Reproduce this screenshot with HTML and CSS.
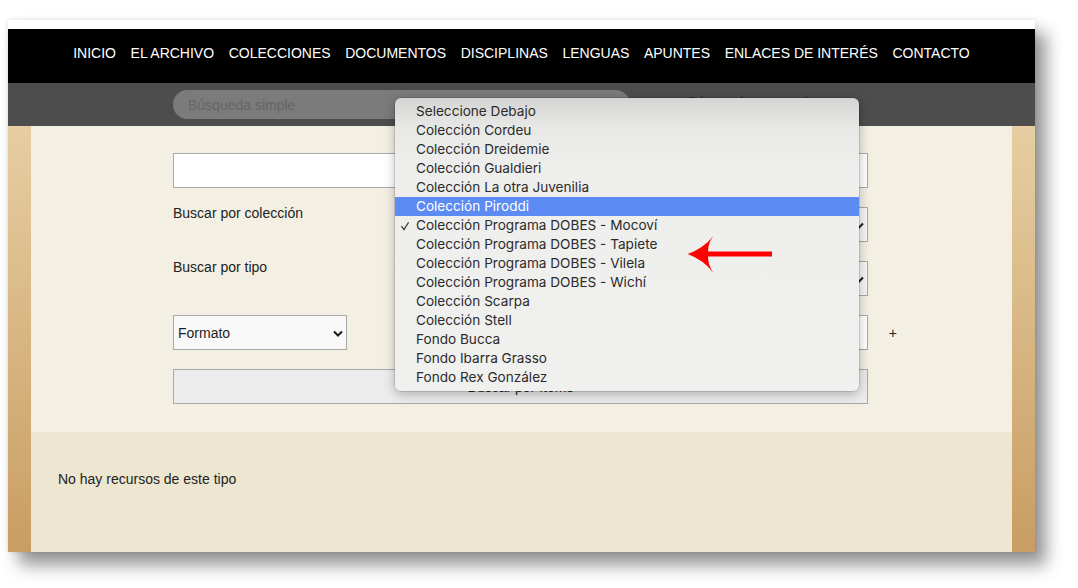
FILE: index.html
```html
<!DOCTYPE html>
<html lang="es">
<head>
<meta charset="utf-8">
<title>Archivo</title>
<link rel="stylesheet" href="styles.css">
</head>
<body>
<div class="shot">
  <div class="topstrip"></div>
  <nav class="nav">
    <span>INICIO</span>
    <span>EL ARCHIVO</span>
    <span>COLECCIONES</span>
    <span>DOCUMENTOS</span>
    <span>DISCIPLINAS</span>
    <span>LENGUAS</span>
    <span>APUNTES</span>
    <span>ENLACES DE INTERÉS</span>
    <span>CONTACTO</span>
  </nav>
  <div class="searchband">
    <div class="pill">Búsqueda simple</div>
    <div class="adv">Búsqueda avanzada</div>
  </div>
  <div class="main">
    <div class="content">
      <div class="form">
        <div class="field"></div>
        <div class="row">
          <span class="label">Buscar por colección</span>
          <div class="sel grow"><svg class="chev" width="10" height="7" viewBox="0 0 10 7"><path d="M1 1.5 L5 5.5 L9 1.5" fill="none" stroke="#1a1a1a" stroke-width="2"/></svg></div>
        </div>
        <div class="row">
          <span class="label">Buscar por tipo</span>
          <div class="sel grow"><svg class="chev" width="10" height="7" viewBox="0 0 10 7"><path d="M1 1.5 L5 5.5 L9 1.5" fill="none" stroke="#1a1a1a" stroke-width="2"/></svg></div>
        </div>
        <div class="row r4">
          <div class="sel fmt"><span>Formato</span><svg class="chev" width="10" height="7" viewBox="0 0 10 7"><path d="M1 1.5 L5 5.5 L9 1.5" fill="none" stroke="#1a1a1a" stroke-width="2"/></svg></div>
          <div class="field grow"></div>
          <span class="plus">+</span>
        </div>
        <div class="btn">Buscar por ítems</div>
      </div>
      <div class="results">No hay recursos de este tipo</div>
    </div>
  </div>
</div>

<div class="popup">
  <div class="opt">Seleccione Debajo</div>
  <div class="opt">Colección Cordeu</div>
  <div class="opt">Colección Dreidemie</div>
  <div class="opt">Colección Gualdieri</div>
  <div class="opt">Colección La otra Juvenilia</div>
  <div class="opt hl">Colección Piroddi</div>
  <div class="opt checked"><svg class="check" width="10" height="10" viewBox="0 0 10 10"><path d="M1.5 5.2 L4 8.6 L8.6 1.2" fill="none" stroke="#333" stroke-width="1.2"/></svg>Colección Programa DOBES - Mocoví</div>
  <div class="opt">Colección Programa DOBES - Tapiete</div>
  <div class="opt">Colección Programa DOBES - Vilela</div>
  <div class="opt">Colección Programa DOBES - Wichí</div>
  <div class="opt">Colección Scarpa</div>
  <div class="opt">Colección Stell</div>
  <div class="opt">Fondo Bucca</div>
  <div class="opt">Fondo Ibarra Grasso</div>
  <div class="opt">Fondo Rex González</div>
</div>

<svg class="arrow" width="92" height="44" viewBox="0 0 92 44">
  <path d="M3.7 21 Q20 15 29.3 3 Q24 10 24 18.5 L88 18.5 L88 23.5 L24 23.5 Q24 32 29.3 40 Q20 27 3.7 21 Z" fill="#ff0000"/>
</svg>
</body>
</html>
```

FILE: styles.css
```css
html, body {
  margin: 0;
  padding: 0;
  background: #ffffff;
}

body {
  font-family: "Liberation Sans", Arial, sans-serif;
  position: relative;
  width: 1078px;
  height: 588px;
  overflow: hidden;
}

.shot {
  margin: 20px 0 0 8px;
  width: 1027px;
  height: 532px;
  background: #ffffff;
  box-shadow: 11px 13px 16px rgba(0, 0, 0, 0.42), 0 0 5px rgba(0, 0, 0, 0.12);
  display: flex;
  flex-direction: column;
}

.topstrip {
  height: 9px;
  flex: none;
  background: #ffffff;
}

.nav {
  height: 54px;
  flex: none;
  box-sizing: border-box;
  padding-bottom: 6px;
  background: #000000;
  display: flex;
  justify-content: center;
  align-items: center;
  gap: 14.6px;
  color: #ffffff;
  font-size: 14px;
}

.searchband {
  height: 43px;
  flex: none;
  box-sizing: border-box;
  background: #4d4d4d;
  display: flex;
  align-items: flex-start;
  padding-left: 165px;
}

.pill {
  margin-top: 7px;
  width: 457px;
  height: 29px;
  box-sizing: border-box;
  border-radius: 15px;
  background: #7b7b7b;
  color: #656565;
  font-size: 14px;
  line-height: 30px;
  padding-left: 15px;
}

.adv {
  margin-left: 58px;
  margin-top: 11px;
  color: #2e2e2e;
  font-size: 14px;
  line-height: 16px;
}

.main {
  flex: 1;
  display: flex;
  padding: 0 23px;
  background: linear-gradient(#e6cea2, #c99d63);
}

.content {
  flex: 1;
  display: flex;
  flex-direction: column;
}

.form {
  height: 306px;
  flex: none;
  box-sizing: border-box;
  background: #f3efe3;
  padding: 27px 0 0 142px;
  display: flex;
  flex-direction: column;
  gap: 19px;
}

.form > * {
  width: 695px;
}

.field {
  height: 35px;
  box-sizing: border-box;
  border: 1px solid #a8a8a8;
  background: #ffffff;
}

.row {
  height: 35px;
  display: flex;
  align-items: flex-start;
}

.label {
  width: 227px;
  flex: none;
  margin-top: -2px;
  font-size: 14px;
  line-height: 16px;
  color: #222222;
}

.grow {
  flex: 1;
}

.sel {
  height: 35px;
  box-sizing: border-box;
  border: 1px solid #a8a8a8;
  background: #f6f6f6;
  display: flex;
  align-items: center;
  justify-content: space-between;
  padding: 0 3px 0 4px;
  font-size: 14px;
  color: #1e1e1e;
}

.sel.grow {
  justify-content: flex-end;
}

.fmt {
  width: 174px;
  flex: none;
  background: #f8f8f8;
}

.chev {
  display: block;
  margin-top: 1px;
}

.form > .r4 {
  width: 724px;
  align-items: center;
}

.r4 .fmt {
  margin-right: 53px;
}

.plus {
  width: 29px;
  flex: none;
  text-align: right;
  padding-right: 0;
  box-sizing: border-box;
  font-size: 14px;
  color: #222222;
}

.btn {
  height: 35px;
  box-sizing: border-box;
  border: 1px solid #a8a8a8;
  background: #ececec;
  display: flex;
  align-items: center;
  justify-content: center;
  font-size: 14px;
  color: #222222;
}

.results {
  flex: 1;
  background: #ede7d2;
  padding: 39px 0 0 27px;
  font-size: 14px;
  line-height: 16px;
  color: #222222;
}

.popup {
  position: absolute;
  left: 395px;
  top: 98px;
  width: 464px;
  height: 293px;
  box-sizing: border-box;
  padding: 4px 0;
  border-radius: 6px;
  background: linear-gradient(#d4d4d2 0, #e8e8e6 30px, #eeeeec 70px, #f0f0ef 100%);
  box-shadow: 0 3px 12px rgba(0, 0, 0, 0.28), 0 0 0 0.5px rgba(0, 0, 0, 0.22);
  font-family: Inter, "Noto Sans", sans-serif;
  font-size: 13.6px;
  color: #2b2b2b;
}

.opt {
  position: relative;
  height: 19px;
  line-height: 19px;
  padding-left: 21px;
  white-space: nowrap;
}

.opt.hl {
  background: #5b8bf3;
  color: #ffffff;
}

.check {
  position: absolute;
  left: 5px;
  top: 5px;
}

.arrow {
  position: absolute;
  left: 684px;
  top: 233px;
}
```
